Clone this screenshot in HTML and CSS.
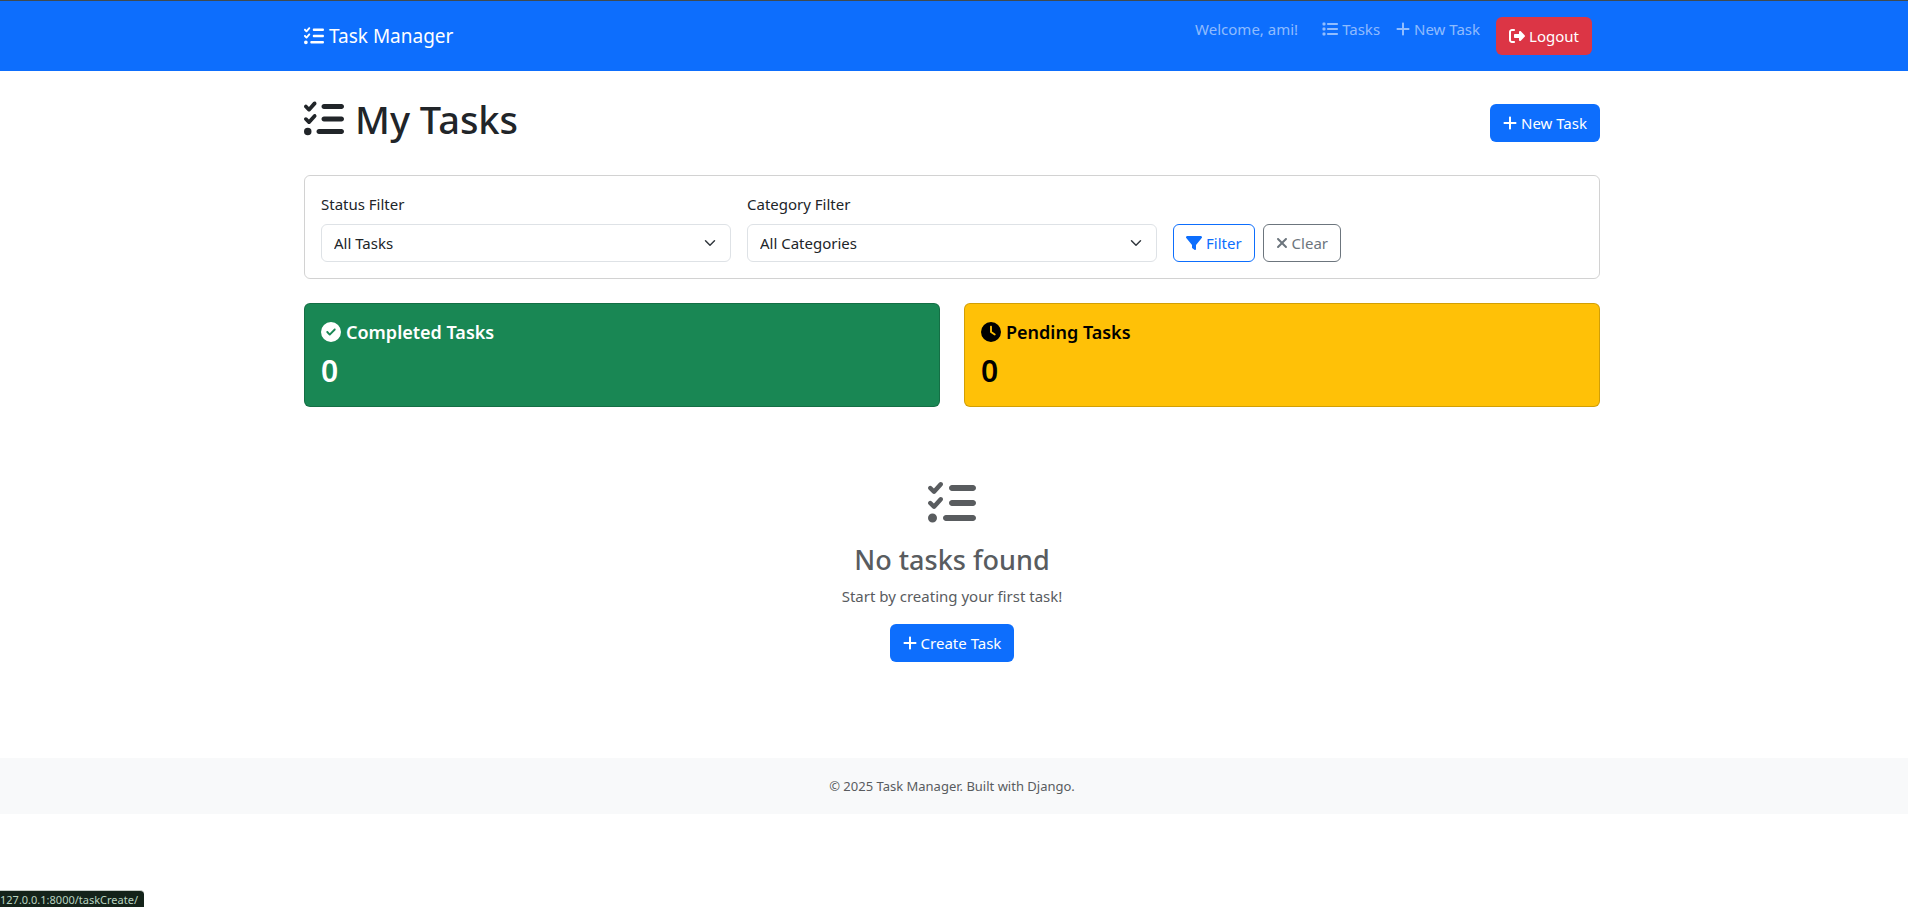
FILE: index.html
```html
<!DOCTYPE html>
<html lang="en">
<head>
<meta charset="utf-8">
<meta name="viewport" content="width=device-width, initial-scale=1">
<title>My Tasks - Task Manager</title>
<link rel="stylesheet" href="styles.css">
</head>
<body>
<svg class="sprite" aria-hidden="true">
  <symbol id="list-check" viewBox="0 0 512 512"><path d="M152.1 38.2c9.9 8.9 10.7 24 1.8 33.9l-72 80c-4.4 4.9-10.6 7.8-17.2 7.9s-12.9-2.4-17.6-7L7 113C-2.3 103.6-2.3 88.4 7 79s24.6-9.4 33.9 0l22.1 22.1 55.1-61.2c8.9-9.9 24-10.7 33.9-1.8zm0 160c9.9 8.9 10.7 24 1.8 33.9l-72 80c-4.4 4.9-10.6 7.8-17.2 7.9s-12.9-2.4-17.6-7L7 273c-9.4-9.4-9.4-24.6 0-33.9s24.6-9.4 33.9 0l22.1 22.1 55.1-61.2c8.9-9.9 24-10.7 33.9-1.8zM224 96c0-17.7 14.3-32 32-32l224 0c17.7 0 32 14.3 32 32s-14.3 32-32 32l-224 0c-17.7 0-32-14.3-32-32zm0 160c0-17.7 14.3-32 32-32l224 0c17.7 0 32 14.3 32 32s-14.3 32-32 32l-224 0c-17.7 0-32-14.3-32-32zM160 416c0-17.7 14.3-32 32-32l288 0c17.7 0 32 14.3 32 32s-14.3 32-32 32l-288 0c-17.7 0-32-14.3-32-32zM48 368a48 48 0 1 1 0 96 48 48 0 1 1 0-96z"/></symbol>
  <symbol id="list" viewBox="0 0 512 512"><path d="M40 48C26.7 48 16 58.7 16 72l0 48c0 13.3 10.7 24 24 24l48 0c13.3 0 24-10.7 24-24l0-48c0-13.3-10.7-24-24-24L40 48zM192 64c-17.7 0-32 14.3-32 32s14.3 32 32 32l288 0c17.7 0 32-14.3 32-32s-14.3-32-32-32L192 64zm0 160c-17.7 0-32 14.3-32 32s14.3 32 32 32l288 0c17.7 0 32-14.3 32-32s-14.3-32-32-32l-288 0zm0 160c-17.7 0-32 14.3-32 32s14.3 32 32 32l288 0c17.7 0 32-14.3 32-32s-14.3-32-32-32l-288 0zM16 232l0 48c0 13.3 10.7 24 24 24l48 0c13.3 0 24-10.7 24-24l0-48c0-13.3-10.7-24-24-24l-48 0c-13.3 0-24 10.7-24 24zM40 368c-13.3 0-24 10.7-24 24l0 48c0 13.3 10.7 24 24 24l48 0c13.3 0 24-10.7 24-24l0-48c0-13.3-10.7-24-24-24l-48 0z"/></symbol>
  <symbol id="plus" viewBox="0 0 448 512"><path d="M256 80c0-17.7-14.3-32-32-32s-32 14.3-32 32l0 144L48 224c-17.7 0-32 14.3-32 32s14.3 32 32 32l144 0 0 144c0 17.7 14.3 32 32 32s32-14.3 32-32l0-144 144 0c17.7 0 32-14.3 32-32s-14.3-32-32-32l-144 0 0-144z"/></symbol>
  <symbol id="logout" viewBox="0 0 512 512"><path d="M377.9 105.9L500.7 228.7c7.2 7.2 11.3 17.1 11.3 27.3s-4.1 20.1-11.3 27.3L377.9 406.1c-6.4 6.4-15 9.9-24 9.9c-18.7 0-33.9-15.2-33.9-33.9l0-62.1-128 0c-17.7 0-32-14.3-32-32l0-64c0-17.7 14.3-32 32-32l128 0 0-62.1c0-18.7 15.2-33.9 33.9-33.9c9 0 17.6 3.6 24 9.9zM160 96L96 96c-17.7 0-32 14.3-32 32l0 256c0 17.7 14.3 32 32 32l64 0c17.7 0 32 14.3 32 32s-14.3 32-32 32l-64 0c-53 0-96-43-96-96L0 128C0 75 43 32 96 32l64 0c17.7 0 32 14.3 32 32s-14.3 32-32 32z"/></symbol>
  <symbol id="funnel" viewBox="0 0 512 512"><path d="M3.9 54.9C10.5 40.9 24.5 32 40 32l432 0c15.5 0 29.5 8.9 36.1 22.9s4.6 30.5-5.2 42.5L320 320.9 320 448c0 12.1-6.8 23.2-17.7 28.6s-23.8 4.3-33.5-3l-64-48c-8.1-6-12.8-15.5-12.8-25.6l0-79.1L9 97.3C-.7 85.4-2.8 68.8 3.9 54.9z"/></symbol>
  <symbol id="cross" viewBox="0 0 384 512"><path d="M342.6 150.6c12.5-12.5 12.5-32.8 0-45.3s-32.8-12.5-45.3 0L192 210.7 86.6 105.4c-12.5-12.5-32.8-12.5-45.3 0s-12.5 32.8 0 45.3L146.7 256 41.4 361.4c-12.5 12.5-12.5 32.8 0 45.3s32.8 12.5 45.3 0L192 301.3 297.4 406.6c12.5 12.5 32.8 12.5 45.3 0s12.5-32.8 0-45.3L237.3 256 342.6 150.6z"/></symbol>
  <symbol id="circle-check" viewBox="0 0 512 512"><path d="M256 512A256 256 0 1 0 256 0a256 256 0 1 0 0 512zM369 209L241 337c-9.4 9.4-24.6 9.4-33.9 0l-64-64c-9.4-9.4-9.4-24.6 0-33.9s24.6-9.4 33.9 0l47 47L335 175c9.4-9.4 24.6-9.4 33.9 0s9.4 24.6 0 33.9z"/></symbol>
  <symbol id="clock" viewBox="0 0 512 512"><path d="M256 0a256 256 0 1 1 0 512A256 256 0 1 1 256 0zM232 120l0 136c0 8 4 15.5 10.7 20l96 64c11 7.4 25.9 4.4 33.3-6.7s4.4-25.9-6.7-33.3L280 243.2 280 120c0-13.3-10.7-24-24-24s-24 10.7-24 24z"/></symbol>
</svg>

<nav class="navbar">
  <div class="container navbar-row">
    <a class="brand" href="#"><svg class="icon" aria-hidden="true"><use href="#list-check"/></svg><span>Task Manager</span></a>
    <div class="nav">
      <span class="nav-link welcome">Welcome, ami!</span>
      <a class="nav-link" href="#"><svg class="icon" aria-hidden="true"><use href="#list"/></svg><span>Tasks</span></a>
      <a class="nav-link" href="#"><svg class="icon icon-plus" aria-hidden="true"><use href="#plus"/></svg><span>New Task</span></a>
      <form class="logout"><button class="btn btn-danger" type="button"><svg class="icon" aria-hidden="true"><use href="#logout"/></svg><span>Logout</span></button></form>
    </div>
  </div>
</nav>

<main class="content">
  <div class="container stack">
    <header class="page-head">
      <h1><svg class="icon" aria-hidden="true"><use href="#list-check"/></svg><span>My Tasks</span></h1>
      <a class="btn btn-primary" href="#"><svg class="icon icon-plus" aria-hidden="true"><use href="#plus"/></svg><span>New Task</span></a>
    </header>

    <form class="card filters">
      <div class="field">
        <label for="status">Status Filter</label>
        <select id="status"><option>All Tasks</option><option>Completed</option><option>Pending</option></select>
      </div>
      <div class="field">
        <label for="category">Category Filter</label>
        <select id="category"><option>All Categories</option></select>
      </div>
      <div class="actions">
        <button class="btn btn-outline-primary" type="button"><svg class="icon" aria-hidden="true"><use href="#funnel"/></svg><span>Filter</span></button>
        <a class="btn btn-outline-secondary" href="#"><svg class="icon icon-cross" aria-hidden="true"><use href="#cross"/></svg><span>Clear</span></a>
      </div>
    </form>

    <section class="stats">
      <div class="card stat-done">
        <h5><svg class="icon" aria-hidden="true"><use href="#circle-check"/></svg><span>Completed Tasks</span></h5>
        <h2>0</h2>
      </div>
      <div class="card stat-pending">
        <h5><svg class="icon" aria-hidden="true"><use href="#clock"/></svg><span>Pending Tasks</span></h5>
        <h2>0</h2>
      </div>
    </section>

    <section class="empty">
      <svg class="icon" aria-hidden="true"><use href="#list-check"/></svg>
      <h3>No tasks found</h3>
      <p>Start by creating your first task!</p>
      <a class="btn btn-primary" href="#"><svg class="icon icon-plus" aria-hidden="true"><use href="#plus"/></svg><span>Create Task</span></a>
    </section>
  </div>
</main>

<footer class="footer"><p>© 2025 Task Manager. Built with Django.</p></footer>

<div class="link-status"><span>127.0.0.1:8000/taskCreate/</span></div>
</body>
</html>
```

FILE: styles.css
```css
*, *::before, *::after { box-sizing: border-box; }

body {
  margin: 0;
  background: #fff;
  color: #212529;
  font-family: "Segoe UI", "Noto Sans", "Open Sans", sans-serif;
  font-size: 15px;
  line-height: 24px;
}

h1, h2, h3, h5, p { margin: 0; font-weight: 500; }
p { font-weight: 400; }
a { color: inherit; text-decoration: none; }

.sprite { display: none; }

.icon {
  flex: none;
  width: 16px;
  height: 16px;
  fill: currentColor;
}
.icon-plus { width: 14px; }
.icon-cross { width: 12px; }

.container {
  width: 100%;
  max-width: 1320px;
  margin: 0 auto;
  padding: 0 12px;
}

.navbar {
  border-top: 1px solid #3f4a4f;
  padding: 8px 4px 8px 0;
  background: #0d6efd;
  color: #fff;
}
.navbar-row {
  display: flex;
  align-items: center;
  justify-content: space-between;
}
.brand {
  display: flex;
  align-items: center;
  gap: 5px;
  font-size: 19px;
  line-height: 30px;
}
.brand .icon { width: 20px; height: 20px; }
.nav { display: flex; align-items: flex-start; }
.nav-link {
  display: flex;
  align-items: center;
  gap: 4px;
  padding: 8px;
  color: rgba(255, 255, 255, .55);
}
.welcome { margin-right: 8px; }
.logout { padding: 8px; }

.btn {
  display: inline-flex;
  align-items: center;
  gap: 4px;
  border: 1px solid transparent;
  border-radius: 6px;
  padding: 6px 12px;
  background: transparent;
  font: inherit;
  cursor: pointer;
}
.btn-danger { background: #dc3545; color: #fff; }
.btn-primary { background: #0d6efd; color: #fff; }
.btn-outline-primary { border-color: #0d6efd; color: #0d6efd; }
.btn-outline-secondary { border-color: #6c757d; color: #6c757d; }

.content { padding: 24px 4px 48px 0; }
.stack {
  display: flex;
  flex-direction: column;
  gap: 24px;
}

.page-head {
  display: flex;
  align-items: center;
  justify-content: space-between;
}
.page-head h1 {
  display: flex;
  align-items: center;
  gap: 11px;
  padding-bottom: 8px;
  font-size: 38px;
  line-height: 48px;
}
.page-head h1 .icon { width: 40px; height: 40px; }

.card {
  border: 1px solid rgba(0, 0, 0, .176);
  border-radius: 6px;
  padding: 16px;
}

.filters {
  display: grid;
  grid-template-columns: repeat(3, 1fr);
  align-items: end;
  gap: 16px;
}
.field { display: grid; gap: 8px; }
.field select {
  appearance: none;
  width: 100%;
  border: 1px solid #dee2e6;
  border-radius: 6px;
  padding: 6px 36px 6px 12px;
  background: #fff url("data:image/svg+xml,%3Csvg xmlns='http://www.w3.org/2000/svg' viewBox='0 0 16 16'%3E%3Cpath fill='none' stroke='%23343a40' stroke-linecap='round' stroke-linejoin='round' stroke-width='2' d='m2 5 6 6 6-6'/%3E%3C/svg%3E") no-repeat right 12px center / 16px 12px;
  color: inherit;
  font: inherit;
}
.actions { display: flex; gap: 8px; }

.stats {
  display: grid;
  grid-template-columns: 1fr 1fr;
  gap: 24px;
}
.stats h5 {
  display: flex;
  align-items: center;
  gap: 5px;
  margin-bottom: 8px;
  font-size: 18px;
  font-weight: 600;
  line-height: 24px;
}
.stats .icon { width: 20px; height: 20px; }
.stats h2 { font-size: 30px; font-weight: 600; line-height: 38px; }
.stat-done { background: #198754; color: #fff; }
.stat-pending { background: #ffc107; color: #000; }

.empty {
  display: flex;
  flex-direction: column;
  align-items: center;
  padding: 48px 0;
  color: #595c5f;
}
.empty > .icon { width: 48px; height: 48px; margin-bottom: 16px; }
.empty h3 { margin-bottom: 7px; font-size: 27px; line-height: 34px; }
.empty p { margin-bottom: 16px; }

.footer {
  padding: 16px 4px 16px 0;
  background: #f8f9fa;
  color: #595c5f;
  text-align: center;
}
.footer p { font-size: 13px; }

.link-status {
  position: fixed;
  left: 0;
  bottom: 0;
  border-top: 1px solid #c9cfca;
  border-radius: 0 4px 0 0;
  padding: 1px 6px 0 0;
  background: #14231a;
  color: #b9d3c0;
  font-size: 11px;
  line-height: 15px;
}
```
